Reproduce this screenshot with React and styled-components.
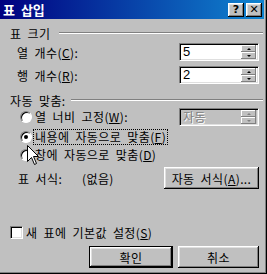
import React from 'react';
import styled, { createGlobalStyle } from 'styled-components';

const GlobalStyle = createGlobalStyle`
html, body {
  margin: 0;
  padding: 0;
  background: #c0c0c0;
}
body {
  font-family: "Noto Sans CJK KR", "Noto Sans", sans-serif;
  font-size: 12px;
  color: #000;
}
`;

const raised = `
box-shadow: inset -1px -1px 0 #000, inset 1px 1px 0 #fff, inset -2px -2px 0 #808080, inset 2px 2px 0 #dfdfdf;
`;

const Mn = ({ children }) => <U>{children}</U>;

const App = () => (
  <>
    <GlobalStyle />
    <Window>
      <TitleBar>
        <TitleText>표 삽입</TitleText>
        <CaptionButton>?</CaptionButton>
        <CaptionButton $gap={2}>✕</CaptionButton>
      </TitleBar>
      <Body>
        <GroupHeader $top={7}>
          <span>표 크기</span>
          <EtchedLine $gap={9} />
        </GroupHeader>
        <FieldRow $top={3}>
          <FieldLabel>열 개수(<Mn>C</Mn>):</FieldLabel>
          <SpinBox value="5" />
        </FieldRow>
        <FieldRow $top={5}>
          <FieldLabel>행 개수(<Mn>R</Mn>):</FieldLabel>
          <SpinBox value="2" />
        </FieldRow>

        <GroupHeader $top={9}>
          <span>자동 맞춤:</span>
          <EtchedLine $gap={5} />
        </GroupHeader>
        <RadioRow $top={1} $height={18}>
          <Radio />
          <RadioLabel>열 너비 고정(<Mn>W</Mn>):</RadioLabel>
          <SpinBox value="자동" disabled />
        </RadioRow>
        <RadioRow $top={3} $height={16}>
          <Radio $checked />
          <RadioLabel $focused>내용에 자동으로 맞춤(<Mn>F</Mn>)</RadioLabel>
        </RadioRow>
        <RadioRow $top={2} $height={16}>
          <Radio />
          <RadioLabel>창에 자동으로 맞춤(<Mn>D</Mn>)</RadioLabel>
        </RadioRow>
        <FormatRow>
          <FormatLabel>표 서식:</FormatLabel>
          <FormatValue>(없음)</FormatValue>
          <PushButton $width={95}>자동 서식(<Mn>A</Mn>)...</PushButton>
        </FormatRow>

        <Spacer />

        <CheckRow>
          <CheckBox />
          <span>새 표에 기본값 설정(<Mn>S</Mn>)</span>
        </CheckRow>
        <ButtonRow>
          <PushButton $width={84} $default>확인</PushButton>
          <PushButton $width={81}>취소</PushButton>
        </ButtonRow>
      </Body>
      <Cursor width="12" height="20" viewBox="0 0 12 20">
        <path d="M0.5 0.5 L0.5 16.5 L4.5 12.5 L7.5 19.5 L9.5 18.5 L6.5 11.5 L11.5 11.5 Z" fill="#fff" stroke="#000" strokeWidth="1" />
      </Cursor>
    </Window>
  </>
);

const SpinBox = ({ value, disabled }) => (
  <SpinField $disabled={disabled}>
    <SpinValue $disabled={disabled}>{value}</SpinValue>
    <Spinner>
      <SpinButton><Arrow $up $disabled={disabled} /></SpinButton>
      <SpinButton><Arrow $disabled={disabled} /></SpinButton>
    </Spinner>
  </SpinField>
);

const Window = styled.div`
position: relative;
width: 267px;
height: 274px;
box-sizing: border-box;
background: #c0c0c0;
border-right: 1px solid #000;
border-bottom: 1px solid #000;
box-shadow: inset -1px -1px 0 #808080;
display: flex;
flex-direction: column;
overflow: hidden;
`;

const TitleBar = styled.div`
height: 19px;
margin-right: 2px;
padding: 0 2px 0 3px;
background: linear-gradient(to right, #000080, #1084d0);
display: flex;
align-items: center;
color: #fff;
font-weight: bold;
font-size: 13px;
`;

const TitleText = styled.div`
flex: 1;
word-spacing: 3px;
`;

const CaptionButton = styled.div`
width: 16px;
height: 14px;
margin-left: ${({ $gap }) => $gap || 0}px;
background: #c0c0c0;
${raised}
color: #000;
display: flex;
align-items: center;
justify-content: center;
font-family: "DejaVu Sans", sans-serif;
font-size: 11px;
font-weight: bold;
line-height: 1;
`;

const Body = styled.div`
flex: 1;
display: flex;
flex-direction: column;
padding: 0 7px 5px 10px;
word-spacing: 3px;
letter-spacing: 0.4px;
`;

const U = styled.span`
text-decoration: underline;
`;

const GroupHeader = styled.div`
display: flex;
align-items: center;
height: 14px;
margin-top: ${({ $top }) => $top}px;
white-space: nowrap;
`;

const EtchedLine = styled.div`
flex: 1;
margin-left: ${({ $gap }) => $gap}px;
margin-right: -4px;
border-top: 1px solid #808080;
border-bottom: 1px solid #fff;
`;

const FieldRow = styled.div`
display: flex;
align-items: center;
height: 18px;
margin-top: ${({ $top }) => $top}px;
padding-left: 7px;
`;

const FieldLabel = styled.div`
flex: 1;
`;

const SpinField = styled.div`
width: 80px;
height: 18px;
box-sizing: border-box;
border: 1px solid;
border-color: #808080 #fff #fff #808080;
box-shadow: inset 1px 1px 0 #000, inset -1px -1px 0 #dfdfdf;
background: ${({ $disabled }) => ($disabled ? '#c0c0c0' : '#fff')};
display: flex;
align-items: center;
padding: 1px 2px 1px 3px;
`;

const SpinValue = styled.div`
flex: 1;
font-size: ${({ $disabled }) => ($disabled ? 12 : 13)}px;
font-family: ${({ $disabled }) => ($disabled ? '"Noto Sans CJK KR", sans-serif' : '"Liberation Sans", sans-serif')};
color: ${({ $disabled }) => ($disabled ? '#808080' : '#000')};
text-shadow: ${({ $disabled }) => ($disabled ? '1px 1px 0 #fff' : 'none')};
line-height: 14px;
`;

const Spinner = styled.div`
display: flex;
flex-direction: column;
width: 15px;
height: 14px;
`;

const SpinButton = styled.div`
flex: 1;
background: #c0c0c0;
box-shadow: inset -1px -1px 0 #808080, inset 1px 1px 0 #fff;
display: flex;
align-items: center;
justify-content: center;
`;

const Arrow = styled.div`
width: 0;
height: 0;
border-left: 2px solid transparent;
border-right: 2px solid transparent;
${({ $up, $disabled }) => ($up
    ? `border-bottom: 2px solid ${$disabled ? '#808080' : '#000'};`
    : `border-top: 2px solid ${$disabled ? '#808080' : '#000'};`)}
`;

const RadioRow = styled.div`
display: flex;
align-items: center;
height: ${({ $height }) => $height}px;
margin-top: ${({ $top }) => $top}px;
padding-left: 10px;
`;

const Radio = styled.div`
position: relative;
width: 12px;
height: 12px;
box-sizing: border-box;
border-radius: 50%;
background: #fff;
border: 1px solid;
border-color: #808080 #fff #fff #808080;
box-shadow: inset 1px 1px 0 #000;
flex-shrink: 0;
&::after {
  content: "";
  display: ${({ $checked }) => ($checked ? 'block' : 'none')};
  position: absolute;
  left: 3px;
  top: 3px;
  width: 4px;
  height: 4px;
  border-radius: 50%;
  background: #000;
}
`;

const RadioLabel = styled.div`
flex: 1;
margin-left: 2px;
padding: 0 1px;
line-height: 14px;
${({ $focused }) => ($focused ? 'flex: 0 0 auto; outline: 1px dotted #000;' : '')}
`;

const FormatRow = styled.div`
display: flex;
align-items: center;
height: 22px;
margin-top: 4px;
padding-left: 8px;
`;

const FormatLabel = styled.div`
width: 64px;
`;

const FormatValue = styled.div`
flex: 1;
`;

const PushButton = styled.div`
width: ${({ $width }) => $width}px;
height: 22px;
box-sizing: border-box;
background: #c0c0c0;
${raised}
${({ $default }) => ($default ? 'border: 1px solid #000;' : '')}
display: flex;
align-items: center;
justify-content: center;
white-space: nowrap;
`;

const Spacer = styled.div`
flex: 1;
`;

const CheckRow = styled.div`
display: flex;
align-items: center;
gap: 3px;
height: 13px;
`;

const CheckBox = styled.div`
width: 13px;
height: 13px;
box-sizing: border-box;
background: #fff;
border: 1px solid;
border-color: #808080 #fff #fff #808080;
box-shadow: inset 1px 1px 0 #000, inset -1px -1px 0 #dfdfdf;
`;

const ButtonRow = styled.div`
display: flex;
justify-content: flex-end;
gap: 5px;
margin-top: 7px;
`;

const Cursor = styled.svg`
position: absolute;
left: 27px;
top: 145px;
`;

export default App;
